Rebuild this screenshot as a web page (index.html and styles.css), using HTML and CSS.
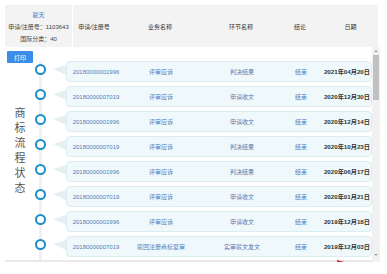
FILE: index.html
```html
<!DOCTYPE html>
<html lang="zh-CN">
<head>
    <meta charset="UTF-8">
    <meta name="viewport" content="width=device-width, initial-scale=1.0">
    <title>商标流程状态</title>
    <link rel="stylesheet" href="styles.css">
</head>
<body>
    <div class="page">
        <div class="head">
            <div class="head-info">
                <span class="mark-name">骏天</span>
                <span>申请/注册号：1103643</span>
                <span>国际分类：40</span>
            </div>
            <div class="head-cols">
                <span>申请/注册号</span>
                <span>业务名称</span>
                <span>环节名称</span>
                <span>结论</span>
                <span>日期</span>
            </div>
        </div>

        <div class="flow">
            <div class="flow-title">商标流程状态</div>
            <div class="flow-list">
                <button class="print-btn">打印</button>
                <div class="rows" id="rows">
                    <!-- flow rows are added here -->
                </div>
            </div>
            <div class="scrollbar">
                <span class="sb-up"></span>
                <span class="sb-thumb"></span>
                <span class="sb-down"></span>
            </div>
            <span class="flag"></span>
        </div>
    </div>

    <script>
        let flows = [
            { no: "20180000001996", biz: "评审应诉", step: "判决结果", result: "结束", date: "2021年04月20日" },
            { no: "20180000007019", biz: "评审应诉", step: "申请收文", result: "结束", date: "2020年12月30日" },
            { no: "20180000001996", biz: "评审应诉", step: "申请收文", result: "结束", date: "2020年12月14日" },
            { no: "20180000007019", biz: "评审应诉", step: "判决结果", result: "结束", date: "2020年10月23日" },
            { no: "20180000001996", biz: "评审应诉", step: "判决结果", result: "结束", date: "2020年06月17日" },
            { no: "20180000007019", biz: "评审应诉", step: "申请收文", result: "结束", date: "2020年01月21日" },
            { no: "20180000001996", biz: "评审应诉", step: "申请收文", result: "结束", date: "2019年12月18日" },
            { no: "20180000007019", biz: "驳回注册商标复审", step: "实审驳文发文", result: "结束", date: "2019年12月03日" }
        ];

        // older entries, further down the list (scrolled out of view)
        for (let i = 0; i < 29; i++) {
            flows.push({
                no: i % 2 ? "20180000001996" : "20180000007019",
                biz: i % 3 ? "评审应诉" : "驳回注册商标复审",
                step: i % 2 ? "申请收文" : "判决结果",
                result: "结束",
                date: (2019 - Math.floor(i / 6)) + "年" + String(11 - (i % 6)).padStart(2, "0") + "月" + String(10 + i % 18).padStart(2, "0") + "日"
            });
        }

        function renderFlows() {
            const rows = document.getElementById('rows');
            rows.innerHTML = '';
            flows.forEach((f) => {
                rows.innerHTML += `
                    <div class="row">
                        <div class="dot-cell"><span class="dot"></span></div>
                        <div class="card">
                            <span class="c-no">${f.no}</span>
                            <span class="c-biz">${f.biz}</span>
                            <span class="c-step">${f.step}</span>
                            <span class="c-result">${f.result}</span>
                            <span class="c-date">${f.date}</span>
                        </div>
                    </div>
                `;
            });
        }

        renderFlows();
    </script>
</body>
</html>
```

FILE: styles.css
```css
/* General Styles */
body {
    margin: 0;
    padding: 5px 0 0 5px;
    font-family: "Liberation Sans", "Noto Sans CJK SC", sans-serif;
    background: #fff;
    color: #333;
}

.page {
    width: 375px;
}

/* header band */
.head {
    display: flex;
    width: 373px;
    height: 42px;
    background: #f3f3f3;
}

.head-info {
    width: 67px;
    border-right: 1px solid #fff;
    display: flex;
    flex-direction: column;
    align-items: center;
    justify-content: center;
    gap: 3px;
    font-size: 6px;
    color: #444;
}

.head-info .mark-name {
    color: #3b7cc4;
}

.head-cols {
    flex: 1;
    display: grid;
    grid-template-columns: 42px 90px 72px 46px 1fr;
    align-items: center;
    justify-items: center;
    font-size: 6px;
    color: #333;
}

/* flow list */
.flow {
    position: relative;
    display: flex;
    height: 215px;
}

.flow-title {
    position: absolute;
    left: 6px;
    top: 60px;
    writing-mode: vertical-rl;
    font-size: 11px;
    letter-spacing: 4px;
    color: #555;
}

.flow-list {
    flex: 1;
    overflow: hidden;
    border-bottom: 2px solid #e9e9e9;
}

.scrollbar {
    width: 8px;
    display: flex;
    flex-direction: column;
    align-items: center;
    background: #f1f1f1;
}

.sb-up,
.sb-down {
    width: 0;
    height: 0;
    margin: 3px 0;
    border-left: 2px solid transparent;
    border-right: 2px solid transparent;
}

.sb-up {
    border-bottom: 2px solid #a3a3a3;
}

.sb-down {
    margin-top: auto;
    margin-bottom: 6px;
    border-top: 2px solid #a3a3a3;
}

.sb-thumb {
    width: 6px;
    height: 45px;
    background: #c1c1c1;
}

.print-btn {
    display: block;
    margin: 4px 0 -2px 2px;
    width: 26px;
    height: 12px;
    padding: 0;
    border: none;
    border-radius: 1px;
    background: #3a8ee8;
    color: #fff;
    font-family: inherit;
    font-size: 6px;
}

.rows {
    background: linear-gradient(#eef0f1, #eef0f1) no-repeat 34px 0 / 3px 100%;
}

.row {
    display: flex;
    height: 21px;
    margin-bottom: 4px;
}

.dot-cell {
    width: 61px;
    position: relative;
}

.dot {
    position: absolute;
    left: 30px;
    top: 3px;
    width: 7px;
    height: 7px;
    border: 2.5px solid #1b8ec8;
    border-radius: 50%;
    background: #fff;
}

.card {
    flex: 1;
    position: relative;
    display: grid;
    grid-template-columns: 58px 72px 90px 28px 1fr;
    align-items: center;
    background: #eff9fb;
    border: 1px solid #dcedf1;
    border-radius: 4px;
    font-size: 6px;
    color: #5679b8;
}

.card::before {
    content: "";
    position: absolute;
    left: -14px;
    top: 3px;
    border-top: 4px solid transparent;
    border-bottom: 6px solid transparent;
    border-right: 13px solid #e6eff1;
}

.card span {
    display: flex;
    justify-content: center;
    white-space: nowrap;
}

.card .c-date {
    justify-content: flex-end;
    padding-right: 1px;
    font-weight: bold;
    font-size: 6.2px;
    color: #333;
}

.flag {
    position: absolute;
    left: 332px;
    bottom: -4px;
    width: 0;
    height: 0;
    border-top: 3px solid transparent;
    border-bottom: 3px solid transparent;
    border-left: 11px solid #d9262c;
}
```
